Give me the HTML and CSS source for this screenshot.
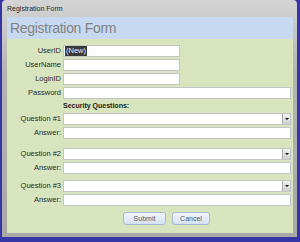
FILE: index.html
```html
<!DOCTYPE html>
<html lang="en">
<head>
  <meta charset="UTF-8">
  <title>Registration Form</title>
  <link rel="stylesheet" href="styles.css">
</head>
<body>
  <div class="window">
    <div class="titlebar">Registration Form</div>
    <div class="client">
      <div class="header">Registration Form</div>
      <form class="form" onsubmit="return false">
        <label>UserID</label>
        <div class="field short"><span class="sel">(New)</span></div>

        <label>UserName</label>
        <input class="field short" type="text">

        <label>LoginID</label>
        <input class="field short" type="text">

        <label>Password</label>
        <input class="field" type="password">

        <div class="section">Security Questions:</div>

        <label>Question #1</label>
        <div class="combo"><div class="combo-text"></div><div class="arrow"></div></div>
        <label>Answer:</label>
        <input class="field" type="text">

        <div class="spacer"></div>

        <label>Question #2</label>
        <div class="combo"><div class="combo-text"></div><div class="arrow"></div></div>
        <label>Answer:</label>
        <input class="field" type="text">

        <div class="spacer small"></div>

        <label>Question #3</label>
        <div class="combo"><div class="combo-text"></div><div class="arrow"></div></div>
        <label>Answer:</label>
        <input class="field" type="text">

        <div class="actions">
          <button class="btn submit" type="submit">Submit</button>
          <button class="btn cancel" type="button">Cancel</button>
        </div>
      </form>
    </div>
  </div>
</body>
</html>
```

FILE: styles.css
```css
body { margin: 0; background: #3535a6; height: 242px; overflow: hidden; font-family: "Liberation Sans", Arial, sans-serif; }
.window { margin-left: 2px; width: 295px; height: 237px; box-sizing: border-box; padding: 0 4px 4px 5px; background: linear-gradient(#d4d4d4, #b4b4b4 30%, #a8a8a8); border-radius: 4px 4px 0 0; display: flex; flex-direction: column; }
.titlebar { height: 17px; line-height: 18px; font-size: 7px; color: #1e1e1e; }
.client { flex: 1; background: #d8e4bd; display: flex; flex-direction: column; }
.header { height: 22px; line-height: 22px; background: #c6d9f0; color: #828282; font-size: 14px; letter-spacing: -0.3px; padding-left: 3px; }
.form { display: grid; grid-template-columns: 54px 1fr; column-gap: 2px; row-gap: 2px; padding: 6px 2px 0 0; margin: 0; }
.form label { text-align: right; font-size: 7.5px; line-height: 12px; color: #2a2a2a; }
.field { box-sizing: border-box; height: 12px; margin: 0; padding: 0 1px; border: 1px solid #c4c4c4; background: #fff; font-size: 8px; font-family: inherit; }
.field.short { width: 117px; }
.sel { display: inline-block; background: #3a3a3a; color: #f0e8ff; font-size: 7.5px; line-height: 10px; padding: 0 1px; }
.section { grid-column: 2; font-size: 7px; font-weight: bold; line-height: 10px; color: #222; }
.combo { display: flex; height: 12px; box-sizing: border-box; border: 1px solid #c4c4c4; background: #fff; }
.combo-text { flex: 1; }
.arrow { width: 7px; background: linear-gradient(#f2f2f2, #cfcfcf); border-left: 1px solid #a8a8a8; display: flex; align-items: center; justify-content: center; }
.arrow::after { content: ""; border-left: 2px solid transparent; border-right: 2px solid transparent; border-top: 2px solid #111; }
.spacer { grid-column: 1 / 3; height: 5px; }
.spacer.small { height: 2px; }
.actions { grid-column: 2; display: flex; gap: 6px; padding-left: 60px; margin-top: 4px; }
.btn { height: 13px; padding: 0; border: 1px solid #a9b9d2; border-radius: 3px; background: linear-gradient(#f0f4fb, #d5e1f1); color: #4b5a70; font-size: 7px; font-family: inherit; }
.submit { width: 43px; }
.cancel { width: 38px; }
```
